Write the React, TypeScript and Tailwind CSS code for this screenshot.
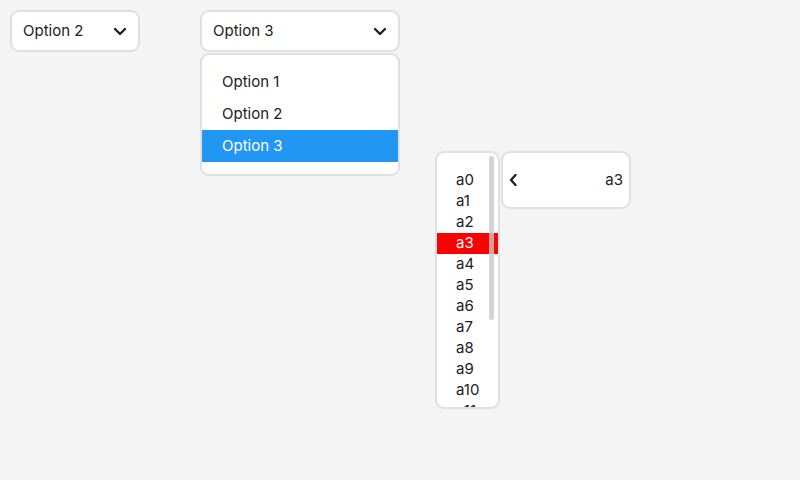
import React from 'react';

const font = { fontFamily: 'Inter, "Noto Sans", sans-serif' };

function ChevronDown() {
  return (
    <svg width="14" height="9" viewBox="0 0 14 9" className="shrink-0">
      <path d="M2 2 L7 7 L12 2" fill="none" stroke="#212121" strokeWidth="2.4" strokeLinecap="round" strokeLinejoin="round" />
    </svg>
  );
}

function ChevronLeft() {
  return (
    <svg width="9" height="14" viewBox="0 0 9 14" className="shrink-0">
      <path d="M6.5 2 L2 7 L6.5 12" fill="none" stroke="#212121" strokeWidth="2.4" strokeLinecap="round" strokeLinejoin="round" />
    </svg>
  );
}

const letters = Array.from({ length: 12 }, (_, i) => `a${i}`);

export default function App() {
  return (
    <div className="w-[800px] h-[480px] bg-[#f4f4f4] text-[#212121] overflow-hidden" style={font}>
      <div className="flex items-start">
        {/* dropdown 1 */}
        <div className="ml-[10px] mt-[10px] w-[130px] h-[42px] rounded-[9px] border-2 border-[#e0e0e0] bg-white flex items-center justify-between pl-[11px] pr-[11px] text-[15px]">
          <span>Option 2</span>
          <ChevronDown />
        </div>

        {/* dropdown 2, open */}
        <div className="ml-[60px] mt-[10px] w-[200px] flex flex-col gap-[1px]">
          <div className="h-[42px] rounded-[9px] border-2 border-[#e0e0e0] bg-white flex items-center justify-between pl-[11px] pr-[11px] text-[15px]">
            <span>Option 3</span>
            <ChevronDown />
          </div>
          <div className="h-[123px] rounded-[9px] border-2 border-[#e0e0e0] bg-white pt-[11px] text-[15px] overflow-hidden">
            <div className="h-[32px] flex items-center pl-[20px]">Option 1</div>
            <div className="h-[32px] flex items-center pl-[20px]">Option 2</div>
            <div className="h-[32px] flex items-center pl-[20px] bg-[#2196f3] text-white">Option 3</div>
          </div>
        </div>

        {/* list + dropdown 4 */}
        <div className="ml-[35px] mt-[151px] flex items-start gap-[1px]">
          <div className="relative w-[65px] h-[258px] rounded-[9px] border-2 border-[#e0e0e0] bg-white overflow-hidden pt-[17px] text-[15px]">
            {letters.map((l) => (
              <div
                key={l}
                className={`h-[21px] flex items-center pl-[19px] ${l === 'a3' ? 'bg-[#ff0000] text-white' : ''}`}
              >
                {l}
              </div>
            ))}
            <div className="absolute left-[52px] top-[3px] w-[5px] h-[164px] rounded-full bg-[#c8c8c8]/80" />
          </div>
          <div className="w-[130px] h-[58px] rounded-[9px] border-2 border-[#e0e0e0] bg-white flex items-center justify-between pl-[6px] pr-[6px] text-[15px]">
            <ChevronLeft />
            <span>a3</span>
          </div>
        </div>
      </div>
    </div>
  );
}
